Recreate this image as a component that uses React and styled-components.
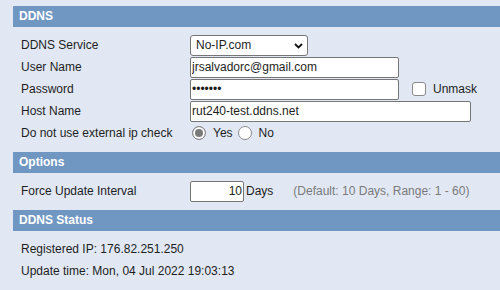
import React from 'react';
import styled, { createGlobalStyle } from 'styled-components';

const GlobalStyle = createGlobalStyle`
    html, body {
        margin: 0;
        padding: 0;
        background: #e1e8f4;
    }
    body {
        font-family: "Liberation Sans", Arial, sans-serif;
        font-size: 12px;
        color: #1e1e1e;
    }
`;

const Page = styled.div`
    width: 500px;
    height: 290px;
    padding: 6px 0 0 13px;
    box-sizing: border-box;
    overflow: hidden;
`;

const SectionHeader = styled.div`
    height: 21px;
    line-height: 21px;
    padding-left: 6px;
    background: #7097c2;
    color: #ffffff;
    font-weight: bold;
    font-size: 12px;
`;

const SectionBody = styled.div`
    padding: 7px 0 8px 8px;
    display: flex;
    flex-direction: column;
`;

const Row = styled.div`
    display: grid;
    grid-template-columns: 169px 1fr;
    align-items: center;
    height: 22px;
`;

const Label = styled.div`
    line-height: 22px;
    white-space: nowrap;
`;

const Field = styled.div`
    display: flex;
    align-items: center;
    height: 22px;
`;

const TextInput = styled.input`
    box-sizing: border-box;
    width: ${(p) => p.$w}px;
    height: 21px;
    margin: 0;
    padding: 0 ${(p) => (p.$right ? 1 : 1)}px;
    border: 1px solid #767676;
    border-radius: 2px;
    background: #fff;
    font-family: "Liberation Sans", Arial, sans-serif;
    font-size: 12px;
    color: #1e1e1e;
    text-align: ${(p) => (p.$right ? 'right' : 'left')};
    outline: none;
`;

const SelectWrap = styled.div`
    position: relative;
    width: 118px;
    height: 21px;
`;

const Select = styled.select`
    appearance: none;
    box-sizing: border-box;
    width: 118px;
    height: 21px;
    margin: 0;
    padding: 0 0 0 5px;
    border: 1px solid #767676;
    border-radius: 3px;
    background: #fff;
    font-family: "Liberation Sans", Arial, sans-serif;
    font-size: 12px;
    color: #1e1e1e;
    outline: none;
`;

const Chevron = styled.svg`
    position: absolute;
    right: 5px;
    top: 8px;
    pointer-events: none;
`;

const Checkbox = styled.input`
    appearance: none;
    box-sizing: border-box;
    width: 14px;
    height: 14px;
    margin: 0 7px 0 13px;
    border: 1px solid #8a8a8a;
    border-radius: 3px;
    background: #fff;
`;

const Radio = styled.input`
    appearance: none;
    box-sizing: border-box;
    width: 14px;
    height: 14px;
    margin: 0 7px 0 ${(p) => p.$ml}px;
    border: 1px solid #8a8a8a;
    border-radius: 50%;
    background: #fff;
    &:checked {
        background: #7a7a7a;
        box-shadow: inset 0 0 0 2px #fff;
    }
`;

const Unit = styled.span`
    margin-left: 2px;
`;

const Hint = styled.span`
    margin-left: 20px;
    color: #7a7a7a;
`;

const StatusLine = styled.div`
    height: 22px;
    line-height: 22px;
`;

const App = () => {
    return (
        <>
            <GlobalStyle />
            <Page>
                <SectionHeader>DDNS</SectionHeader>
                <SectionBody>
                    <Row>
                        <Label>DDNS Service</Label>
                        <Field>
                            <SelectWrap>
                                <Select defaultValue="noip">
                                    <option value="noip">No-IP.com</option>
                                    <option value="dyndns">DynDNS</option>
                                </Select>
                                <Chevron width="9" height="6" viewBox="0 0 9 6">
                                    <path d="M1 1 L4.5 4.5 L8 1" fill="none" stroke="#111" strokeWidth="1.8" />
                                </Chevron>
                            </SelectWrap>
                        </Field>
                    </Row>
                    <Row>
                        <Label>User Name</Label>
                        <Field>
                            <TextInput $w={209} defaultValue="jrsalvadorc@gmail.com" />
                        </Field>
                    </Row>
                    <Row>
                        <Label>Password</Label>
                        <Field>
                            <TextInput $w={209} type="password" defaultValue="1234567" />
                            <Checkbox type="checkbox" />
                            <span>Unmask</span>
                        </Field>
                    </Row>
                    <Row>
                        <Label>Host Name</Label>
                        <Field>
                            <TextInput $w={281} defaultValue="rut240-test.ddns.net" />
                        </Field>
                    </Row>
                    <Row>
                        <Label>Do not use external ip check</Label>
                        <Field>
                            <Radio type="radio" name="ipcheck" $ml={2} defaultChecked />
                            <span>Yes</span>
                            <Radio type="radio" name="ipcheck" $ml={5} />
                            <span>No</span>
                        </Field>
                    </Row>
                </SectionBody>

                <SectionHeader>Options</SectionHeader>
                <SectionBody>
                    <Row>
                        <Label>Force Update Interval</Label>
                        <Field>
                            <TextInput $w={54} $right defaultValue="10" />
                            <Unit>Days</Unit>
                            <Hint>(Default: 10 Days, Range: 1 - 60)</Hint>
                        </Field>
                    </Row>
                </SectionBody>

                <SectionHeader>DDNS Status</SectionHeader>
                <SectionBody>
                    <StatusLine>Registered IP: 176.82.251.250</StatusLine>
                    <StatusLine>Update time: Mon, 04 Jul 2022 19:03:13</StatusLine>
                </SectionBody>
            </Page>
        </>
    );
};

export default App;
